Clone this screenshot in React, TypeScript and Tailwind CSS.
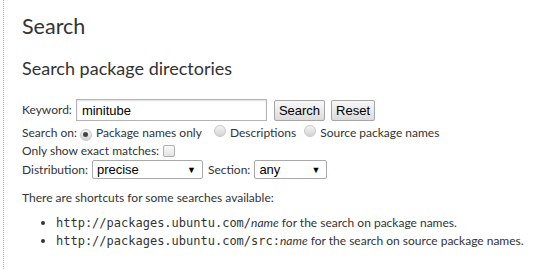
import React from 'react';

const body = { fontFamily: 'Lato, "Open Sans", sans-serif' };
const ctrl = { fontFamily: '"Liberation Sans", Arial, sans-serif' };
const mono = { fontFamily: '"DejaVu Sans Mono", monospace' };

const Radio: React.FC<{ checked?: boolean }> = ({ checked }) => (
  <span className="inline-flex h-[12px] w-[12px] items-center justify-center rounded-full border border-[#c8c8c8] bg-gradient-to-b from-[#f4f4f4] to-[#d4d4d4]">
    {checked && <span className="h-[5px] w-[5px] rounded-full bg-[#444]" />}
  </span>
);

const Select: React.FC<{ value: string; width: string }> = ({ value, width }) => (
  <div
    className={`flex h-[19px] items-center justify-between rounded-[2px] border border-[#a9a9a9] bg-white pl-[4px] pr-[6px] text-[13px] text-black ${width}`}
    style={ctrl}
  >
    <span>{value}</span>
    <span className="text-[9px]">▼</span>
  </div>
);

const Button: React.FC<{ label: string }> = ({ label }) => (
  <button
    className="h-[21px] rounded-[2px] border border-[#a6a6a6] bg-gradient-to-b from-[#f8f8f8] to-[#dcdcdc] px-[4px] text-[13px] leading-none text-black"
    style={ctrl}
  >
    {label}
  </button>
);

export default function App() {
  return (
    <div className="flex h-[269px] w-[540px] overflow-hidden bg-white text-[#333]" style={body}>
      <div className="ml-[3px] h-full border-l border-dotted border-[#bbb]" />
      <div className="min-w-0 flex-1 whitespace-nowrap pl-[18px]">
        <h1 className="mt-[12px] text-[21.5px] leading-[28px]">Search</h1>
        <h2 className="mt-[17px] text-[18px] leading-[22px]">Search package directories</h2>

        <div className="mt-[20px] text-[12px] leading-[18px]">
          <div className="flex items-center">
            <span>Keyword:</span>
            <input
              defaultValue="minitube"
              className="ml-[4px] h-[22px] w-[191px] border border-[#b3b3b3] px-[5px] text-[13px] text-black shadow-[inset_0_1px_2px_rgba(0,0,0,0.12)] outline-none"
              style={ctrl}
            />
            <div className="ml-[7px] flex gap-[6px]">
              <Button label="Search" />
              <Button label="Reset" />
            </div>
          </div>

          <div className="mt-[3px] flex items-center">
            <span>Search on:</span>
            <span className="ml-[3px]"><Radio checked /></span>
            <span className="ml-[4px]">Package names only</span>
            <span className="ml-[12px]"><Radio /></span>
            <span className="ml-[4px]">Descriptions</span>
            <span className="ml-[8px]"><Radio /></span>
            <span className="ml-[4px]">Source package names</span>
          </div>

          <div className="flex items-center">
            <span>Only show exact matches:</span>
            <span className="ml-[4px] h-[12px] w-[12px] rounded-[2px] border border-[#b0b0b0] bg-gradient-to-b from-[#fafafa] to-[#e2e2e2]" />
          </div>

          <div className="flex items-center">
            <span>Distribution:</span>
            <span className="ml-[4px]"><Select value="precise" width="w-[111px]" /></span>
            <span className="ml-[5px]">Section:</span>
            <span className="ml-[4px]"><Select value="any" width="w-[73px]" /></span>
          </div>

          <p className="mt-[10px]">There are shortcuts for some searches available:</p>

          <ul className="ml-[22px] mt-[7px] list-disc pl-[12px]">
            <li>
              <span className="text-[12px]" style={mono}>http://packages.ubuntu.com/</span>
              <em>name</em> for the search on package names.
            </li>
            <li>
              <span className="text-[12px]" style={mono}>http://packages.ubuntu.com/src:</span>
              <em>name</em> for the search on source package names.
            </li>
          </ul>
        </div>
      </div>
    </div>
  );
}
